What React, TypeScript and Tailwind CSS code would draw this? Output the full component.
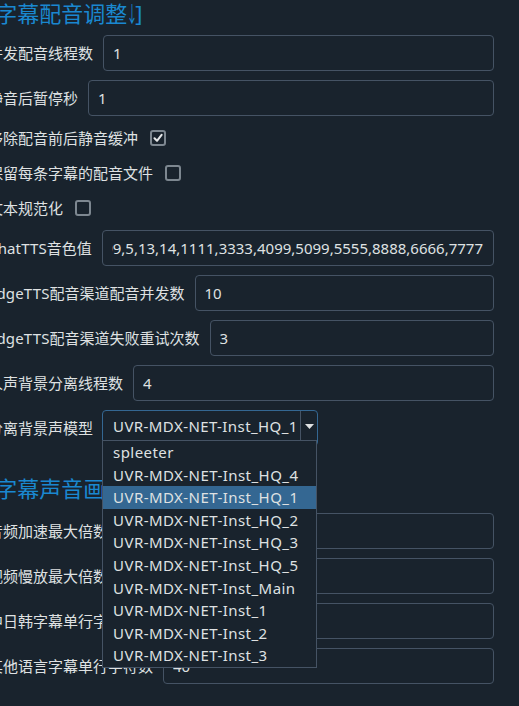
import React from "react";

const FONT = '"Noto Sans", "Noto Sans CJK SC", sans-serif';

const MODELS = [
  "spleeter",
  "UVR-MDX-NET-Inst_HQ_4",
  "UVR-MDX-NET-Inst_HQ_1",
  "UVR-MDX-NET-Inst_HQ_2",
  "UVR-MDX-NET-Inst_HQ_3",
  "UVR-MDX-NET-Inst_HQ_5",
  "UVR-MDX-NET-Inst_Main",
  "UVR-MDX-NET-Inst_1",
  "UVR-MDX-NET-Inst_2",
  "UVR-MDX-NET-Inst_3",
];

function Heading({ title, arrow = false, className = "" }: { title: string; arrow?: boolean; className?: string }) {
  return (
    <div className={`flex h-[26px] items-center text-[22px] leading-[26px] whitespace-nowrap text-[#1a88d0] ${className}`}>
      <span>[{title}</span>
      {arrow && (
        <span className="inline-flex w-[9px] justify-center">
          <span className="inline-block scale-x-[0.5]">↓</span>
        </span>
      )}
      <span className="-ml-[1px]">]</span>
    </div>
  );
}

function Label({ children }: { children: React.ReactNode }) {
  return <span className="shrink-0 whitespace-nowrap text-[15px] text-[#dfe1e2]">{children}</span>;
}

function LatinPrefix({ text }: { text: string }) {
  return <span className="tracking-[0.15px]">{text}</span>;
}

function FieldRow({ label, value, alignEnd = false }: { label: React.ReactNode; value: string; alignEnd?: boolean }) {
  return (
    <div className="flex h-[36px] items-center gap-[10px]">
      <Label>{label}</Label>
      <div className="flex h-full min-w-0 flex-1 items-center rounded-[4px] border border-[#455364] px-[9px]">
        <div
          className={`flex min-w-0 flex-1 overflow-hidden whitespace-nowrap text-[15px] text-[#dfe1e2] ${
            alignEnd ? "justify-end pr-[1px]" : ""
          }`}
        >
          <span className="shrink-0">{value}</span>
        </div>
      </div>
    </div>
  );
}

function CheckRow({ label, checked }: { label: string; checked: boolean }) {
  return (
    <div className="flex h-[26px] items-center gap-[12px]">
      <Label>{label}</Label>
      <div className="flex h-[16px] w-[16px] items-center justify-center rounded-[3px] border-2 border-[#7d8790]">
        {checked && (
          <svg width="10" height="10" viewBox="0 0 10 10">
            <polyline points="1.5,5.2 4,7.8 8.6,1.8" fill="none" stroke="#e6e8ea" strokeWidth="2" strokeLinecap="round" strokeLinejoin="round" />
          </svg>
        )}
      </div>
    </div>
  );
}

function ModelSelect() {
  const current = "UVR-MDX-NET-Inst_HQ_1";
  return (
    <div className="flex h-[36px] items-center gap-[9px]">
      <Label>分离背景声模型</Label>
      <div className="relative h-full w-[216px]">
        <div className="flex h-full items-center rounded-[4px] border border-[#346792]">
          <span className="flex-1 whitespace-nowrap pl-[10px] text-[15px] leading-none tracking-[0.42px] text-[#dfe1e2] -translate-y-[2px]">
            {current}
          </span>
          <div className="flex h-full w-[17px] items-center justify-center border-l border-[#455364]">
            <svg width="9" height="5" viewBox="0 0 9 5" className="-translate-y-[2px]">
              <polygon points="0,0 9,0 4.5,5" fill="#dfe1e2" />
            </svg>
          </div>
        </div>
        <div className="absolute left-0 top-[30px] z-10 w-[215px] border border-[#455364] bg-[#19232d]">
          {MODELS.map((m) => (
            <div
              key={m}
              className={`flex h-[22.6px] items-center whitespace-nowrap pl-[10px] text-[15px] tracking-[0.45px] text-[#dfe1e2] ${
                m === current ? "bg-[#346792]" : ""
              }`}
            >
              {m}
            </div>
          ))}
        </div>
      </div>
    </div>
  );
}

export default function App() {
  return (
    <div className="h-[706px] w-full overflow-hidden bg-[#19232d]" style={{ fontFamily: FONT }}>
      <div className="ml-[-12px] mr-[25px] flex flex-col gap-[9px]">
        <Heading title="字幕配音调整" arrow />
        <FieldRow label="并发配音线程数" value="1" />
        <FieldRow label="静音后暂停秒" value="1" />
        <CheckRow label="移除配音前后静音缓冲" checked />
        <CheckRow label="保留每条字幕的配音文件" checked={false} />
        <CheckRow label="文本规范化" checked={false} />
        <FieldRow
          label={<><LatinPrefix text="ChatTTS" />音色值</>}
          value="11,99,5,13,14,1111,3333,4099,5099,5555,8888,6666,7777"
          alignEnd
        />
        <FieldRow label={<><LatinPrefix text="EdgeTTS" />配音渠道配音并发数</>} value="10" />
        <FieldRow label={<><LatinPrefix text="EdgeTTS" />配音渠道失败重试次数</>} value="3" />
        <FieldRow label="人声背景分离线程数" value="4" />
        <ModelSelect />
        <Heading title="字幕声音画面对齐" className="mt-[20px] mb-[3px]" />
        <FieldRow label="音频加速最大倍数" value="3" />
        <FieldRow label="视频慢放最大倍数" value="10" />
        <FieldRow label="中日韩字幕单行字数" value="20" />
        <FieldRow label="其他语言字幕单行字符数" value="40" />
      </div>
    </div>
  );
}
